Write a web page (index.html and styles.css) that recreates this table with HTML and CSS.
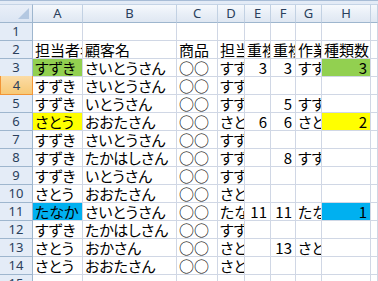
FILE: index.html
```html
<!DOCTYPE html>
<html lang="ja">
<head>
<meta charset="utf-8">
<title>Book1</title>
<link rel="stylesheet" href="styles.css">
</head>
<body>
<div class="frame"></div>
<div class="sheet">
  <div class="corner"><span class="tri"></span></div>
  <div class="ch">A</div><div class="ch">B</div><div class="ch">C</div><div class="ch">D</div><div class="ch">E</div><div class="ch">F</div><div class="ch">G</div><div class="ch">H</div><div class="ch"></div>

  <div class="rh">1</div>
  <div class="c"></div><div class="c"></div><div class="c"></div><div class="c"></div><div class="c"></div><div class="c"></div><div class="c"></div><div class="c"></div><div class="c"></div>

  <div class="rh">2</div>
  <div class="c">担当者名</div><div class="c">顧客名</div><div class="c">商品</div><div class="c">担当者</div><div class="c">重複</div><div class="c">重複</div><div class="c">作業者</div><div class="c">種類数</div><div class="c"></div>

  <div class="rh">3</div>
  <div class="c green">すずき</div><div class="c">さいとうさん</div><div class="c">○○</div><div class="c">すずき</div><div class="c num">3</div><div class="c num">3</div><div class="c">すずき</div><div class="c num green">3</div><div class="c"></div>

  <div class="rh sel">4</div>
  <div class="c">すずき</div><div class="c">さいとうさん</div><div class="c">○○</div><div class="c">すずき</div><div class="c"></div><div class="c"></div><div class="c"></div><div class="c"></div><div class="c"></div>

  <div class="rh">5</div>
  <div class="c">すずき</div><div class="c">いとうさん</div><div class="c">○○</div><div class="c">すずき</div><div class="c"></div><div class="c num">5</div><div class="c">すずき</div><div class="c"></div><div class="c"></div>

  <div class="rh">6</div>
  <div class="c yellow">さとう</div><div class="c">おおたさん</div><div class="c">○○</div><div class="c">さとう</div><div class="c num">6</div><div class="c num">6</div><div class="c">さとう</div><div class="c num yellow">2</div><div class="c"></div>

  <div class="rh">7</div>
  <div class="c">すずき</div><div class="c">さいとうさん</div><div class="c">○○</div><div class="c">すずき</div><div class="c"></div><div class="c"></div><div class="c"></div><div class="c"></div><div class="c"></div>

  <div class="rh">8</div>
  <div class="c">すずき</div><div class="c">たかはしさん</div><div class="c">○○</div><div class="c">すずき</div><div class="c"></div><div class="c num">8</div><div class="c">すずき</div><div class="c"></div><div class="c"></div>

  <div class="rh">9</div>
  <div class="c">すずき</div><div class="c">いとうさん</div><div class="c">○○</div><div class="c">すずき</div><div class="c"></div><div class="c"></div><div class="c"></div><div class="c"></div><div class="c"></div>

  <div class="rh">10</div>
  <div class="c">さとう</div><div class="c">おおたさん</div><div class="c">○○</div><div class="c">さとう</div><div class="c"></div><div class="c"></div><div class="c"></div><div class="c"></div><div class="c"></div>

  <div class="rh">11</div>
  <div class="c blue">たなか</div><div class="c">さいとうさん</div><div class="c">○○</div><div class="c">たなか</div><div class="c num">11</div><div class="c num">11</div><div class="c">たなか</div><div class="c num blue">1</div><div class="c"></div>

  <div class="rh">12</div>
  <div class="c">すずき</div><div class="c">たかはしさん</div><div class="c">○○</div><div class="c">すずき</div><div class="c"></div><div class="c"></div><div class="c"></div><div class="c"></div><div class="c"></div>

  <div class="rh">13</div>
  <div class="c">さとう</div><div class="c">おかさん</div><div class="c">○○</div><div class="c">さとう</div><div class="c"></div><div class="c num">13</div><div class="c">さとう</div><div class="c"></div><div class="c"></div>

  <div class="rh">14</div>
  <div class="c">さとう</div><div class="c">おおたさん</div><div class="c">○○</div><div class="c">さとう</div><div class="c"></div><div class="c"></div><div class="c"></div><div class="c"></div><div class="c"></div>

  <div class="rh">15</div>
  <div class="c"></div><div class="c"></div><div class="c"></div><div class="c"></div><div class="c"></div><div class="c"></div><div class="c"></div><div class="c"></div><div class="c"></div>
</div>
</body>
</html>
```
FILE: styles.css
```css
html, body {
  margin: 0;
  padding: 0;
  background: #ffffff;
  overflow: hidden;
}

/* strip above the column headers */
.frame {
  height: 4px;
  border-top: 1px solid #a7bcd6;
  background: #e3ebf6;
  box-sizing: border-box;
}

.sheet {
  display: grid;
  grid-template-columns: 33px 50px 94px 41px 27px 26px 25px 26px 49px minmax(0, 1fr);
  grid-template-rows: 19px repeat(15, 18px);
  font-family: "Noto Sans CJK JP", "Noto Sans", sans-serif;
  font-feature-settings: "palt";
}

.corner {
  position: relative;
  background: linear-gradient(#e9eff8, #dbe5f3);
  border-right: 1px solid #9eb6ce;
  border-bottom: 1px solid #9eb6ce;
  border-top: 1px solid #c5d4e6;
  box-sizing: border-box;
}

.tri {
  position: absolute;
  right: 3px;
  bottom: 3px;
  width: 0;
  height: 0;
  border-left: 11px solid transparent;
  border-bottom: 11px solid #b4c8e1;
}

/* column headers */
.ch {
  background: linear-gradient(#f6f9fc 0%, #eaf0f8 45%, #dfe7f2 100%);
  border-right: 1px solid #c2d1e3;
  border-bottom: 1px solid #9eb6ce;
  border-top: 1px solid #c5d4e6;
  box-sizing: border-box;
  color: #2a3f5c;
  font-family: "Noto Sans", "Liberation Sans", sans-serif;
  font-size: 13px;
  line-height: 17px;
  text-align: center;
}

/* row headers */
.rh {
  background: #e4ecf7;
  border-right: 1px solid #9eb6ce;
  border-bottom: 1px solid #9eb6ce;
  box-sizing: border-box;
  color: #2a3f5c;
  font-family: "Noto Sans", "Liberation Sans", sans-serif;
  font-size: 13px;
  line-height: 17px;
  text-align: center;
}

.rh.sel {
  background: linear-gradient(#fbdca6, #f7c976);
  border: 1px solid #f29536;
  border-top: none;
  margin-top: -1px;
  line-height: 18px;
}

/* cells */
.c {
  border-right: 1px solid #d0d7e5;
  border-bottom: 1px solid #d0d7e5;
  box-sizing: border-box;
  color: #000000;
  font-size: 15px;
  line-height: 17px;
  padding: 0 2px;
  white-space: nowrap;
  overflow: hidden;
}

.num {
  text-align: right;
  padding-right: 3px;
}

.green { background: #92d050; }
.yellow { background: #ffff00; }
.blue { background: #00b0f0; }
```
